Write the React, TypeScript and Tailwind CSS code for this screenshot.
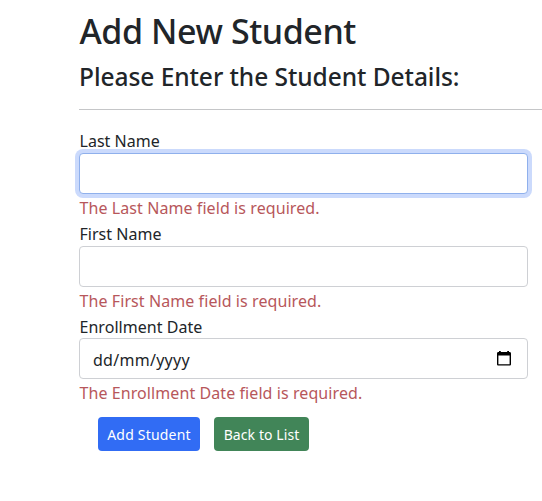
type FieldProps = {
  id: string;
  label: string;
  error: string;
  focused?: boolean;
  date?: boolean;
};

function CalendarIcon() {
  return (
    <svg width="16" height="17" viewBox="0 0 16 17" className="shrink-0" aria-hidden="true">
      <path
        fill="#000"
        fillRule="evenodd"
        d="M3 1h1.800v1h6.400V1H13v1h.6c.8 0 1.400.6 1.400 1.400v10.800c0 .8-.6 1.400-1.400 1.400H2.400c-.8 0-1.400-.6-1.400-1.400V3.400C1 2.600 1.600 2 2.400 2H3V1Zm-.6 4.600v8.600h11.200V5.600H2.400Z"
      />
    </svg>
  );
}

function Field({ id, label, error, focused, date }: FieldProps) {
  return (
    <div className="flex h-[92.6px] flex-col">
      <label
        htmlFor={id}
        className={
          date
            ? "h-[26px] shrink-0 pl-[0.5px] text-[16px] leading-[30px] tracking-[0.04px]"
            : "h-[26px] shrink-0 pl-[0.5px] text-[16px] leading-[28px] tracking-[0.02px]"
        }
      >
        {label}
      </label>
      {date ? (
        <div
          id={id}
          className="flex h-[41px] w-[449px] shrink-0 items-center justify-between rounded-[4px] border border-[#ced0d4] bg-white pr-[15px] pl-[13px]"
        >
          <span className="pt-[2px] text-[16px] leading-[26px] tracking-[0.28px]">dd/mm/yyyy</span>
          <CalendarIcon />
        </div>
      ) : (
        <input
          id={id}
          type="text"
          className={
            focused
              ? "h-[41px] w-[449px] shrink-0 rounded-[4px] border border-[#8fb0ec] bg-white px-[13px] shadow-[0_0_0_4px_#cbdafc] outline-none"
              : "h-[41px] w-[449px] shrink-0 rounded-[4px] border border-[#ced0d4] bg-white px-[13px] outline-none"
          }
        />
      )}
      <span className="h-[26px] shrink-0 pl-[0.5px] text-[16px] leading-[28px] tracking-[0.08px] text-[#b7575b]">
        {error}
      </span>
    </div>
  );
}

export default function App() {
  return (
    <main className="h-[501px] w-[542px] overflow-hidden bg-white pl-[79px] font-['Noto_Sans',sans-serif] text-[#212529]">
      <h1 className="h-[60px] pt-[10px] pl-[0.5px] text-[34px] leading-[42px] font-medium tracking-[-0.42px] whitespace-nowrap">
        Add New Student
      </h1>
      <h2 className="h-[49px] text-[24.5px] leading-[34px] font-medium tracking-[-0.05px] whitespace-nowrap">
        Please Enter the Student Details:
      </h2>
      <hr className="border-0 border-t border-[#c5c6c8]" />
      <form className="pt-[17px]">
        <Field id="last-name" label="Last Name" error="The Last Name field is required." focused />
        <Field id="first-name" label="First Name" error="The First Name field is required." />
        <Field id="enrollment-date" label="Enrollment Date" error="The Enrollment Date field is required." date />
        <div className="flex gap-[14px] pt-[12px] pl-[19px]">
          <button
            type="button"
            className="h-[34px] w-[102px] rounded-[4px] bg-[#316cf4] pt-[2px] text-[14px] tracking-[0.2px] whitespace-nowrap text-white"
          >
            Add Student
          </button>
          <button
            type="button"
            className="h-[34px] w-[95px] rounded-[4px] bg-[#418558] pt-[2px] text-[14px] tracking-[0.08px] whitespace-nowrap text-white"
          >
            Back to List
          </button>
        </div>
      </form>
    </main>
  );
}
